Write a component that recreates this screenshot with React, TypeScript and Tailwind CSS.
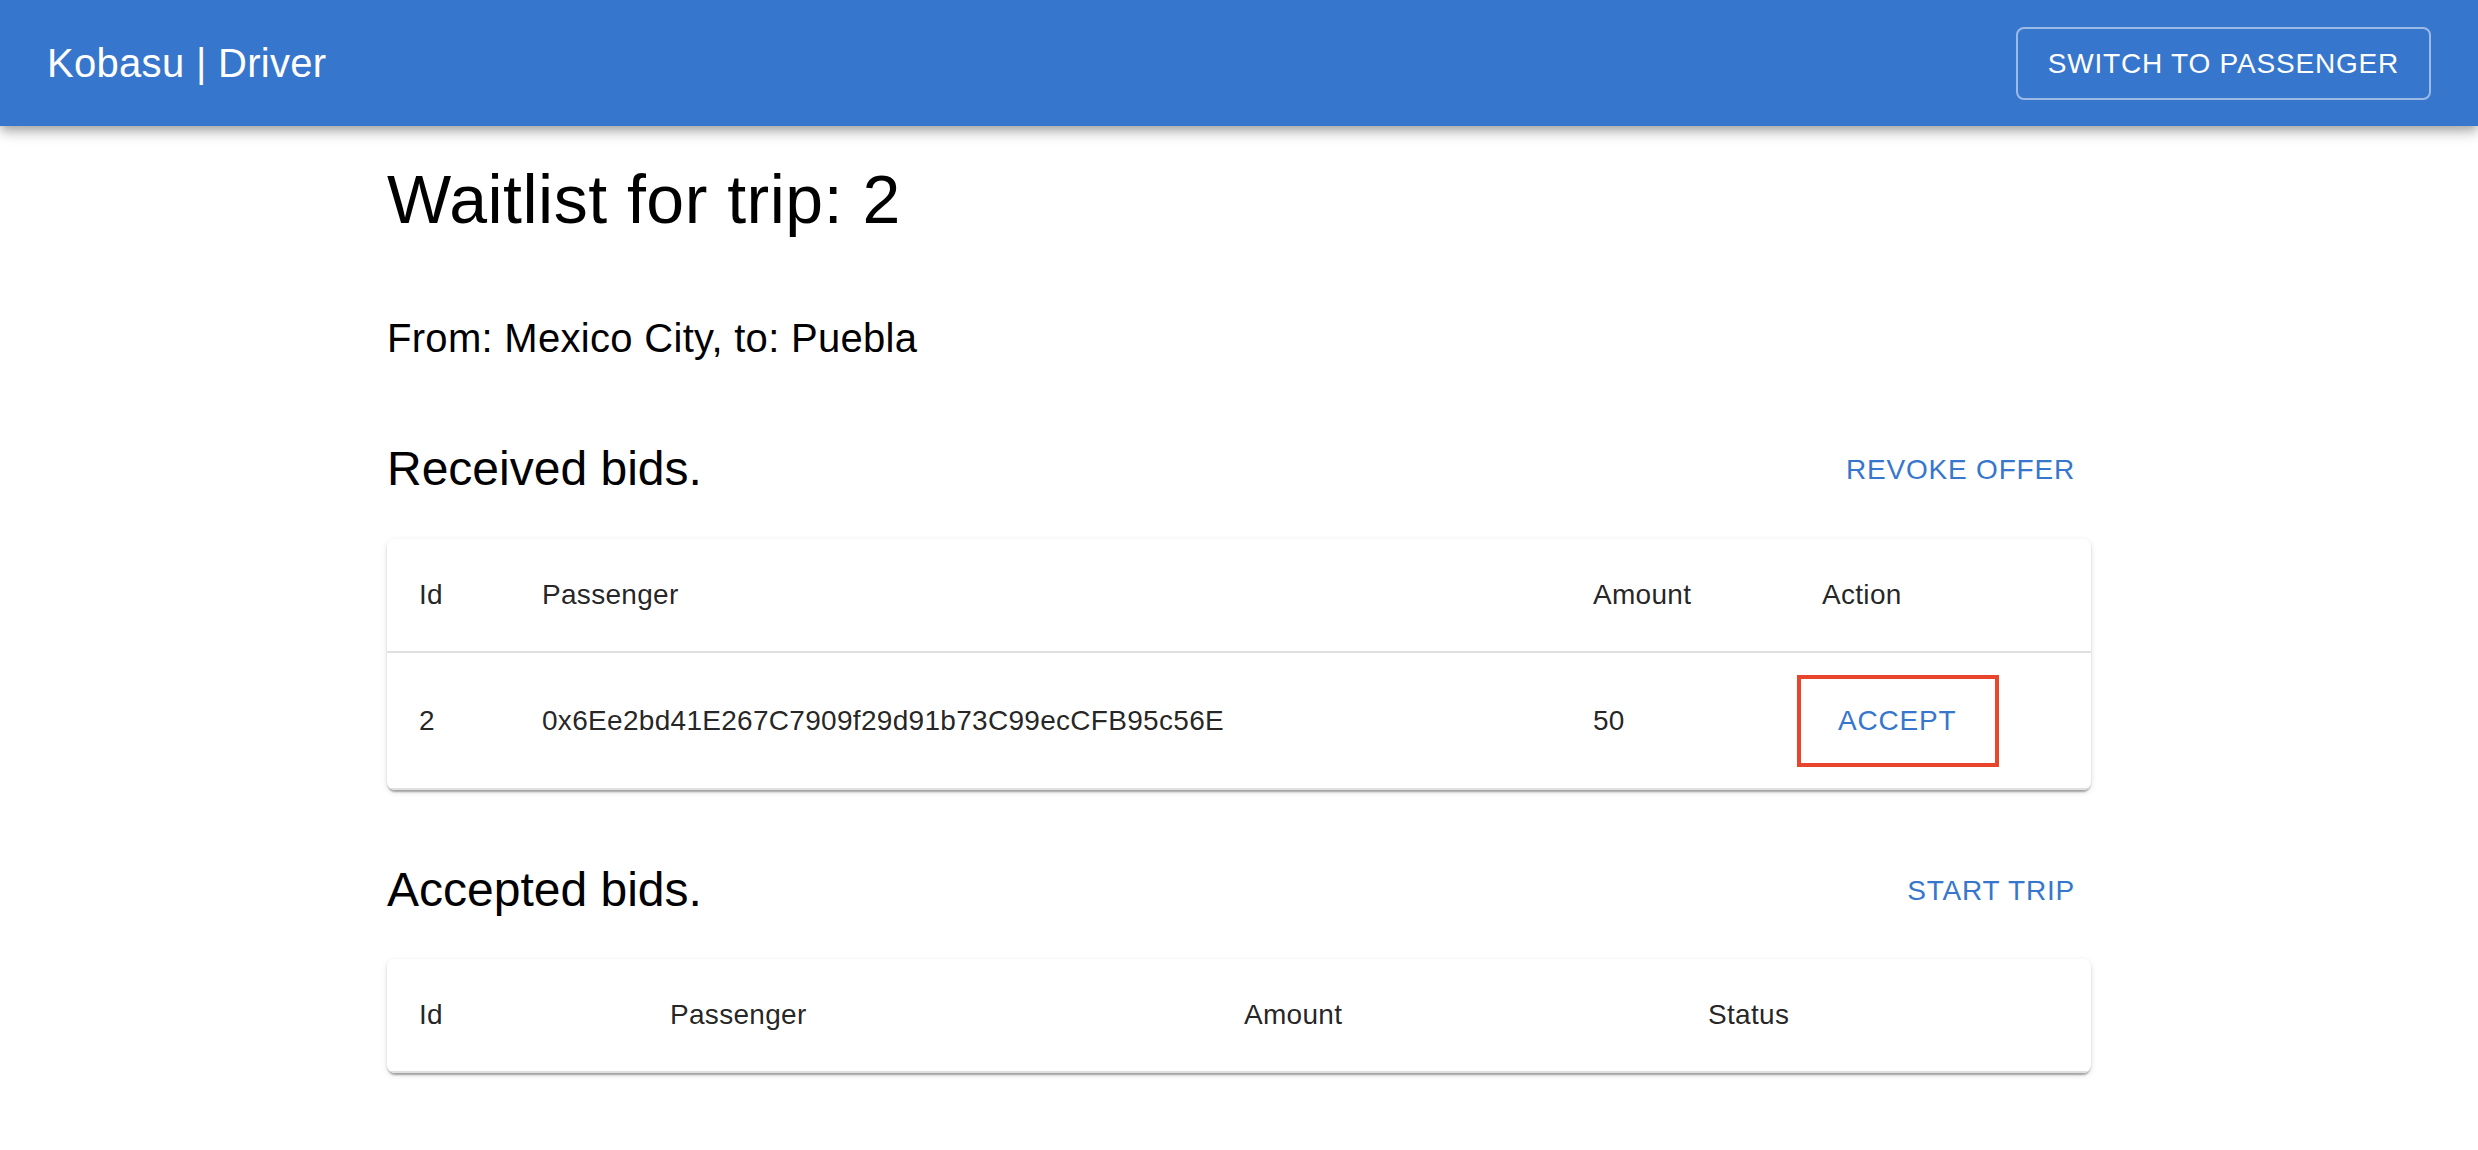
import React from "react";

const bids = [
  { id: 2, passenger: "0x6Ee2bd41E267C7909f29d91b73C99ecCFB95c56E", amount: 50 },
];

const TextButton = ({ children }: { children: React.ReactNode }) => (
  <button className="px-4 py-3 text-[28px] leading-[49px] tracking-[0.8px] uppercase text-[#3776cd] rounded-lg hover:bg-[#3776cd]/5">
    {children}
  </button>
);

const SectionHeader = ({ title, action }: { title: string; action: string }) => (
  <div className="flex items-center justify-between h-[74px]">
    <h2 className="text-[48px] leading-[64px] text-black">{title}</h2>
    <TextButton>{action}</TextButton>
  </div>
);

const Cell = ({ children, head }: { children?: React.ReactNode; head?: boolean }) => (
  <td
    className={`px-8 border-b-2 border-[#e0e0e0] text-[28px] tracking-[0.3px] text-[rgba(0,0,0,0.87)] align-middle ${
      head ? "py-8 leading-[48px]" : "py-[31px] leading-[40px]"
    }`}
  >
    {children}
  </td>
);

const App = () => {
  return (
    <div className="min-h-[1150px] bg-white font-['Liberation_Sans',Arial,sans-serif]">
      <header className="h-[126px] bg-[#3776cd] flex items-center justify-between px-[47px] shadow-[0_4px_8px_-2px_rgba(0,0,0,0.2),0_8px_10px_0_rgba(0,0,0,0.14),0_2px_20px_0_rgba(0,0,0,0.12)] relative">
        <h1 className="text-[40px] leading-[64px] tracking-[0.3px] text-white">Kobasu | Driver</h1>
        <button className="border-2 border-white/50 rounded-lg px-[30px] py-[10px] text-[28px] leading-[49px] tracking-[0.8px] text-white uppercase">
          Switch to passenger
        </button>
      </header>

      <main className="w-[1704px] mx-auto">
        <h1 className="mt-[31px] text-[68px] leading-[84px] tracking-[0.5px] text-black">Waitlist for trip: 2</h1>
        <p className="mt-[65px] text-[40px] leading-[64px] tracking-[0.3px] text-black">From: Mexico City, to: Puebla</p>

        <div className="mt-[62px]">
          <SectionHeader title="Received bids." action="Revoke offer" />
        </div>
        <div className="mt-[33px] rounded-lg bg-white shadow-[0_4px_2px_-2px_rgba(0,0,0,0.2),0_2px_2px_0_rgba(0,0,0,0.14),0_2px_6px_0_rgba(0,0,0,0.12)] overflow-hidden">
          <table className="w-full table-fixed border-collapse text-left">
            <colgroup>
              <col className="w-[123px]" />
              <col className="w-[1051px]" />
              <col className="w-[229px]" />
              <col className="w-[301px]" />
            </colgroup>
            <thead>
              <tr>
                <Cell head>Id</Cell>
                <Cell head>Passenger</Cell>
                <Cell head>Amount</Cell>
                <Cell head>Action</Cell>
              </tr>
            </thead>
            <tbody>
              {bids.map((b) => (
                <tr key={b.id}>
                  <Cell>{b.id}</Cell>
                  <Cell>{b.passenger}</Cell>
                  <Cell>{b.amount}</Cell>
                  <td className="px-8 py-[31px] border-b-2 border-[#e0e0e0] align-middle">
                    <div className="relative inline-block">
                      <TextButton>Accept</TextButton>
                      <span className="absolute -left-[25px] -right-[27px] -top-[9px] -bottom-[10px] border-4 border-[#e8452c] pointer-events-none" />
                    </div>
                  </td>
                </tr>
              ))}
            </tbody>
          </table>
        </div>

        <div className="mt-[63px]">
          <SectionHeader title="Accepted bids." action="Start trip" />
        </div>
        <div className="mt-[32px] rounded-lg bg-white shadow-[0_4px_2px_-2px_rgba(0,0,0,0.2),0_2px_2px_0_rgba(0,0,0,0.14),0_2px_6px_0_rgba(0,0,0,0.12)] overflow-hidden">
          <table className="w-full table-fixed border-collapse text-left">
            <colgroup>
              <col className="w-[251px]" />
              <col className="w-[574px]" />
              <col className="w-[464px]" />
              <col className="w-[415px]" />
            </colgroup>
            <thead>
              <tr>
                <Cell head>Id</Cell>
                <Cell head>Passenger</Cell>
                <Cell head>Amount</Cell>
                <Cell head>Status</Cell>
              </tr>
            </thead>
          </table>
        </div>
      </main>
    </div>
  );
};

export default App;
